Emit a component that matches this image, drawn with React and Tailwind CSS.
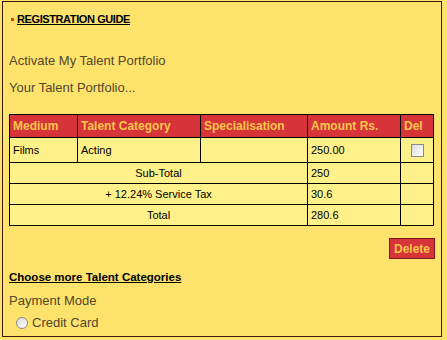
import React from "react";

const rows = [
  { label: "Sub-Total", amount: "250" },
  { label: "+ 12.24% Service Tax", amount: "30.6" },
  { label: "Total", amount: "280.6" },
];

const App = () => {
  return (
    <div className="w-[447px] h-[340px] bg-[#fde36c] pt-[1px] pl-[2px] font-['Liberation_Sans',Arial,sans-serif]">
      <div className="w-[440px] h-[336px] border border-[#3a1a10] px-[6px]">
        {/* Guide link */}
        <div className="flex items-center gap-[3px] mt-[10px] pl-[2px]">
          <span className="w-[3px] h-[3px] bg-[#e0401c]" />
          <span className="text-[11px] font-bold underline text-black leading-[14px] tracking-[-0.4px]">
            REGISTRATION GUIDE
          </span>
        </div>

        <div className="mt-[27px] text-[13px] text-[#54462c] leading-[16px]">
          Activate My Talent Portfolio
        </div>
        <div className="mt-[11px] text-[13px] text-[#54462c] leading-[16px]">
          Your Talent Portfolio...
        </div>

        {/* Portfolio table */}
        <table className="mt-[18px] w-[425px] border-collapse text-[11px] text-black">
          <thead>
            <tr className="h-[23px] bg-[#d7343a] text-[#f8c64a] text-[12px] font-bold text-left">
              <th className="w-[68px] border border-black px-[3px] font-bold">Medium</th>
              <th className="w-[123px] border border-black px-[3px] font-bold">Talent Category</th>
              <th className="w-[107px] border border-black px-[3px] font-bold">Specialisation</th>
              <th className="w-[93px] border border-black px-[3px] font-bold">Amount Rs.</th>
              <th className="border border-black px-[3px] font-bold">Del</th>
            </tr>
          </thead>
          <tbody className="bg-[#fff18a]">
            <tr className="h-[25px]">
              <td className="border border-black px-[3px]">Films</td>
              <td className="border border-black px-[3px]">Acting</td>
              <td className="border border-black px-[3px]"></td>
              <td className="border border-black px-[3px]">250.00</td>
              <td className="border border-black px-[3px] text-center">
                <span className="inline-block w-[13px] h-[13px] border border-[#8a8a8a] bg-gradient-to-br from-[#dcdcdc] to-[#ffffff] align-middle" />
              </td>
            </tr>
            {rows.map((r) => (
              <tr key={r.label} className="h-[21px]">
                <td colSpan={3} className="border border-black px-[3px] py-0 text-center leading-[14px]">
                  {r.label}
                </td>
                <td className="border border-black px-[3px] py-0 leading-[14px]">{r.amount}</td>
                <td className="border border-black px-[3px] py-0"></td>
              </tr>
            ))}
          </tbody>
        </table>

        <div className="flex justify-end mt-[12px]">
          <button className="h-[21px] px-[4px] bg-[#d7343a] border border-[#7a1a1a] text-[#f8c64a] text-[12px] font-bold leading-none">
            Delete
          </button>
        </div>

        <div className="mt-[11px] text-[11.5px] font-bold underline text-black leading-[14px]">
          Choose more Talent Categories
        </div>

        <div className="mt-[9px] text-[13px] text-[#54462c] leading-[16px]">
          Payment Mode
        </div>
        <div className="mt-[6px] flex items-center gap-[4px] pl-[7px]">
          <span className="w-[12px] h-[12px] rounded-full border border-[#8a8a8a] bg-gradient-to-br from-[#d8d8d8] to-[#ffffff]" />
          <span className="text-[13px] text-[#54462c] leading-[16px]">Credit Card</span>
        </div>
      </div>
    </div>
  );
};

export default App;
